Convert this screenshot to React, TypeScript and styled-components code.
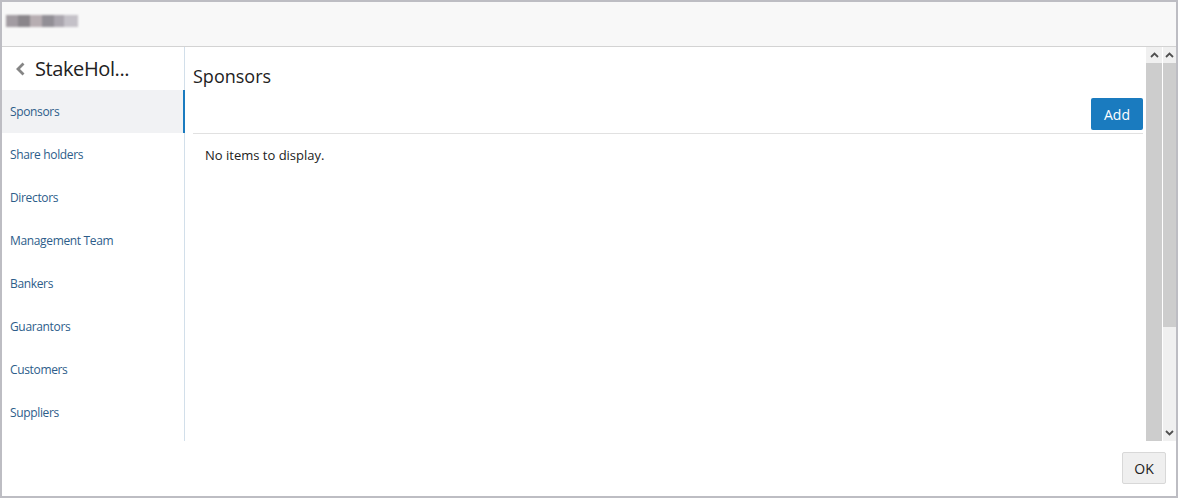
import styled, { createGlobalStyle } from 'styled-components';

const GlobalStyle = createGlobalStyle`
  html, body {
    margin: 0;
    padding: 0;
    background: #ffffff;
  }
  body {
    font-family: "Open Sans", "Noto Sans", "Liberation Sans", sans-serif;
  }
`;

const navItems = [
  'Sponsors',
  'Share holders',
  'Directors',
  'Management Team',
  'Bankers',
  'Guarantors',
  'Customers',
  'Suppliers',
];

function Chevron({ dir }: { dir: 'left' | 'up' | 'down' }) {
  if (dir === 'left') {
    return (
      <svg width="11" height="14" viewBox="0 0 11 14">
        <path d="M8.5 1.5 L3 7 L8.5 12.5" fill="none" stroke="#858585" strokeWidth="2.8" />
      </svg>
    );
  }
  return (
    <svg width="9" height="6" viewBox="0 0 9 6">
      <path
        d={dir === 'up' ? 'M1 5 L4.5 1.5 L8 5' : 'M1 1 L4.5 4.5 L8 1'}
        fill="none"
        stroke="#505050"
        strokeWidth="1.8"
      />
    </svg>
  );
}

export default function App() {
  return (
    <>
      <GlobalStyle />
      <StDialog>
        <StHeader>
          <StBlurTitle>
            <span />
            <span />
            <span />
            <span />
            <span />
            <span />
          </StBlurTitle>
        </StHeader>
        <StBody>
          <StSidebar>
            <StBack>
              <Chevron dir="left" />
              <span>StakeHol...</span>
            </StBack>
            {navItems.map((item, i) => (
              <StNavItem key={item} $active={i === 0}>
                {item}
              </StNavItem>
            ))}
          </StSidebar>
          <StContent>
            <StTitle>Sponsors</StTitle>
            <StToolbar>
              <StPrimaryButton>Add</StPrimaryButton>
            </StToolbar>
            <StEmpty>No items to display.</StEmpty>
          </StContent>
          <StScrollbar>
            <StArrow>
              <Chevron dir="up" />
            </StArrow>
            <StThumb $size={0} />
          </StScrollbar>
          <StScrollbar $outer>
            <StArrow>
              <Chevron dir="up" />
            </StArrow>
            <StThumb $size={264} />
            <StTrack />
            <StArrow>
              <Chevron dir="down" />
            </StArrow>
          </StScrollbar>
        </StBody>
        <StFooter>
          <StButton>OK</StButton>
        </StFooter>
      </StDialog>
    </>
  );
}

const StDialog = styled.div`
  width: 1178px;
  height: 498px;
  box-sizing: border-box;
  border: 2px solid #bdbdc3;
  display: flex;
  flex-direction: column;
  background: #ffffff;
`;

const StHeader = styled.div`
  height: 44px;
  flex: none;
  background: #f8f8f8;
  border-bottom: 1px solid #d3d3d3;
  display: flex;
  align-items: center;
  padding-left: 4px;
`;

const StBlurTitle = styled.div`
  display: flex;
  filter: blur(1.2px);
  margin-top: -6px;

  span {
    display: block;
    width: 12px;
    height: 12px;
    background: #a29ca2;
  }
  span:nth-child(2) {
    background: #8a868b;
  }
  span:nth-child(3) {
    background: #b7aeb2;
  }
  span:nth-child(4) {
    background: #928f96;
  }
  span:nth-child(5) {
    background: #aaa6ae;
    width: 10px;
  }
  span:nth-child(6) {
    background: #c4c1c8;
    width: 14px;
  }
`;

const StBody = styled.div`
  flex: none;
  height: 394px;
  display: flex;
`;

const StSidebar = styled.nav`
  width: 182px;
  flex: none;
  border-right: 1px solid #d2dfea;
  display: flex;
  flex-direction: column;
`;

const StBack = styled.div`
  height: 43px;
  display: flex;
  align-items: center;
  gap: 9px;
  padding-left: 13px;
  font-size: 20px;
  color: #222222;
  letter-spacing: -0.4px;
`;

const StNavItem = styled.div<{ $active?: boolean }>`
  height: 43px;
  flex: none;
  box-sizing: border-box;
  display: flex;
  align-items: center;
  padding-left: 8px;
  font-size: 12px;
  letter-spacing: -0.35px;
  color: #2d5d8a;
  background: ${(p) => (p.$active ? '#f1f2f4' : 'transparent')};
  border-right: 2px solid ${(p) => (p.$active ? '#1a7bbf' : 'transparent')};
  margin-right: -1px;
`;

const StContent = styled.main`
  flex: 1;
  padding: 17px 3px 0 8px;
  display: flex;
  flex-direction: column;
`;

const StTitle = styled.h2`
  margin: 0;
  font-size: 18px;
  font-weight: 400;
  color: #222222;
  line-height: 24px;
`;

const StToolbar = styled.div`
  display: flex;
  justify-content: flex-end;
  margin-top: 10px;
  padding-bottom: 3px;
  border-bottom: 1px solid #e1e1e1;
`;

const StPrimaryButton = styled.button`
  width: 52px;
  height: 32px;
  border: none;
  border-radius: 2px;
  background: #1a7bbf;
  color: #ffffff;
  font-family: inherit;
  font-size: 14px;
  padding: 0;
`;

const StEmpty = styled.p`
  margin: 12px 0 0 12px;
  font-size: 13px;
  color: #222222;
`;

const StScrollbar = styled.div<{ $outer?: boolean }>`
  width: ${(p) => (p.$outer ? '13px' : '16px')};
  flex: none;
  margin-left: ${(p) => (p.$outer ? '1px' : '0')};
  display: flex;
  flex-direction: column;
  background: #f0f0f0;
`;

const StArrow = styled.div`
  height: 16px;
  flex: none;
  display: flex;
  align-items: center;
  justify-content: center;
  background: #f0f0f0;
`;

const StThumb = styled.div<{ $size: number }>`
  height: ${(p) => (p.$size ? `${p.$size}px` : 'auto')};
  flex: ${(p) => (p.$size ? 'none' : '1')};
  background: #cdcdcd;
`;

const StTrack = styled.div`
  flex: 1;
  background: #f0f0f0;
`;

const StFooter = styled.div`
  flex: 1;
  display: flex;
  justify-content: flex-end;
  align-items: flex-start;
  padding: 11px 10px 0 0;
`;

const StButton = styled.button`
  width: 44px;
  height: 32px;
  border: 1px solid #d8d8d8;
  border-radius: 2px;
  background: #efefef;
  color: #222222;
  font-family: inherit;
  font-size: 14px;
  padding: 0;
`;
